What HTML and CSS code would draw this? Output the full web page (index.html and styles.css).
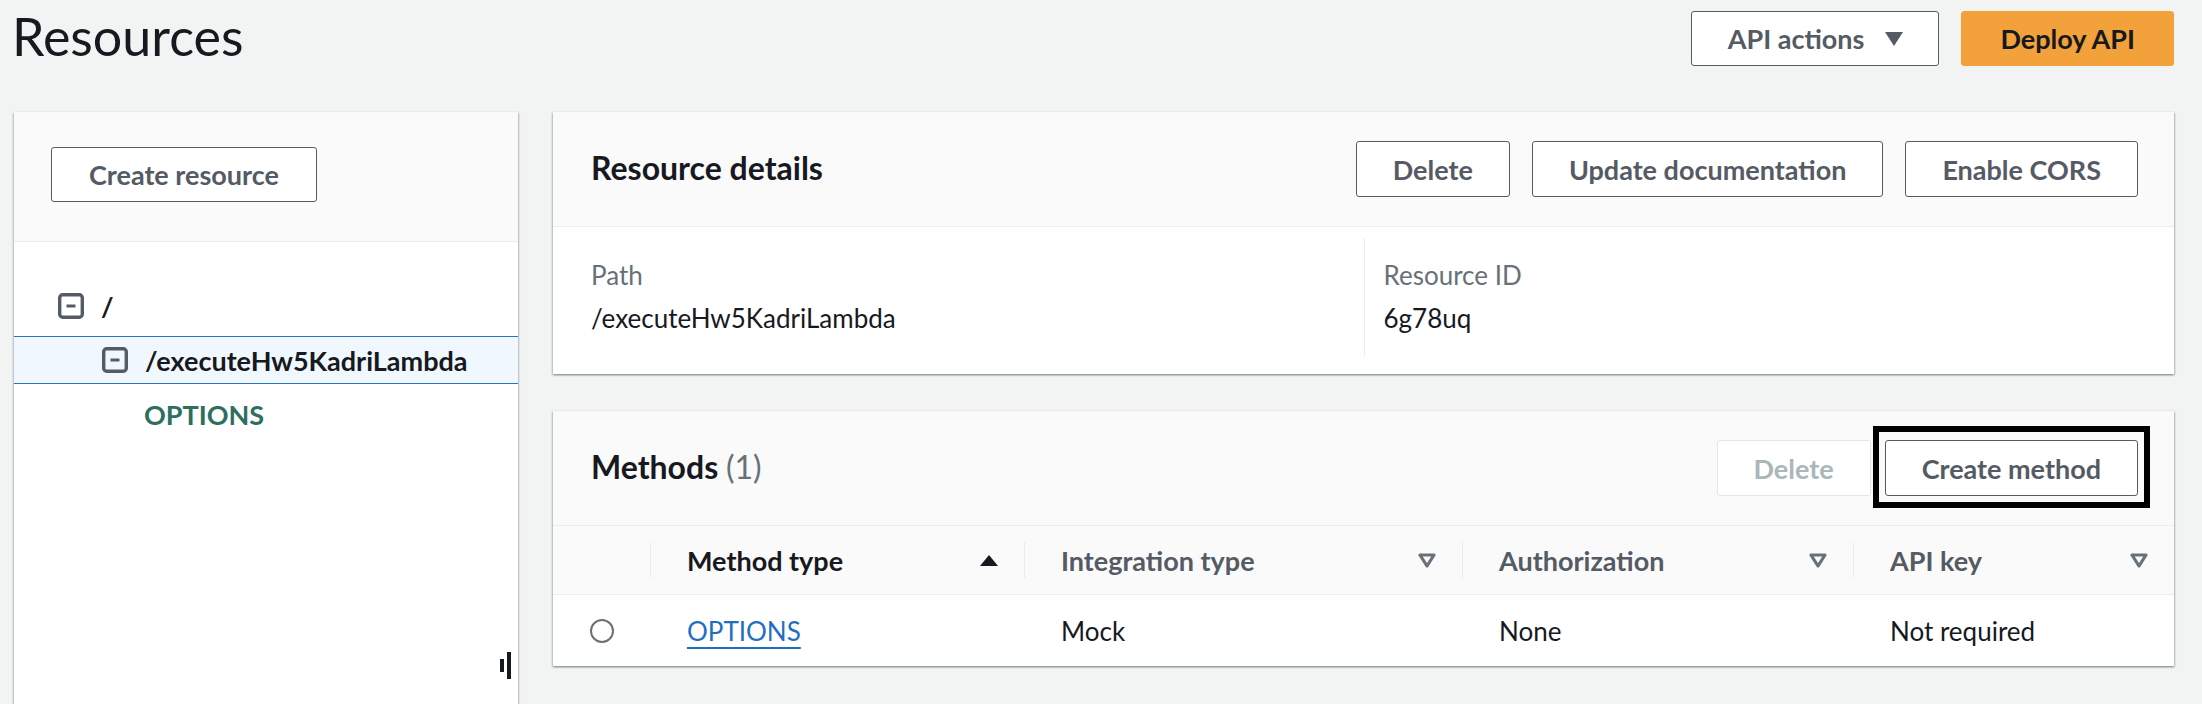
FILE: index.html
```html
<!DOCTYPE html>
<html lang="en">
<head>
<meta charset="utf-8">
<title>Resources</title>
<link rel="stylesheet" href="styles.css">
</head>
<body>
<div class="page">
  <header class="topbar">
    <h1 class="page-title">Resources</h1>
    <div class="actions">
      <button class="btn btn-dropdown">API actions
        <svg class="caret" width="18" height="14" viewBox="0 0 18 14"><polygon points="0,0 18,0 9,14" fill="#545b64"/></svg>
      </button>
      <button class="btn btn-primary">Deploy API</button>
    </div>
  </header>

  <main class="main">
    <aside class="side">
      <div class="side-head">
        <button class="btn">Create resource</button>
      </div>
      <ul class="tree">
        <li class="node lvl0">
          <svg class="toggle" width="26" height="26" viewBox="0 0 26 26"><rect x="1.7" y="1.7" width="22.6" height="22.6" rx="3" fill="none" stroke="#545b64" stroke-width="3.4"/><line x1="8.5" y1="13" x2="17.5" y2="13" stroke="#545b64" stroke-width="3"/></svg>
          <span>/</span>
        </li>
        <li class="node lvl1 selected">
          <svg class="toggle" width="26" height="26" viewBox="0 0 26 26"><rect x="1.7" y="1.7" width="22.6" height="22.6" rx="3" fill="none" stroke="#545b64" stroke-width="3.4"/><line x1="8.5" y1="13" x2="17.5" y2="13" stroke="#545b64" stroke-width="3"/></svg>
          <span>/executeHw5KadriLambda</span>
        </li>
        <li class="node lvl2 method">OPTIONS</li>
      </ul>
      <svg class="resize-handle" width="11" height="28" viewBox="0 0 11 28"><rect x="0" y="7" width="4" height="13" fill="#16191f"/><rect x="7" y="0" width="4" height="27" fill="#16191f"/></svg>
    </aside>

    <section class="content">
      <div class="panel">
        <div class="panel-head">
          <h2 class="panel-title">Resource details</h2>
          <div class="btn-group">
            <button class="btn">Delete</button>
            <button class="btn">Update documentation</button>
            <button class="btn">Enable CORS</button>
          </div>
        </div>
        <div class="details">
          <div class="detail">
            <div class="label">Path</div>
            <div class="value">/executeHw5KadriLambda</div>
          </div>
          <div class="detail">
            <div class="label">Resource ID</div>
            <div class="value">6g78uq</div>
          </div>
        </div>
      </div>

      <div class="panel">
        <div class="panel-head">
          <h2 class="panel-title">Methods <span class="count">(1)</span></h2>
          <div class="btn-group tight">
            <button class="btn btn-disabled">Delete</button>
            <button class="btn btn-focus">Create method</button>
          </div>
        </div>
        <div class="table-head">
          <div class="th-empty"></div>
          <div class="th sorted"><span>Method type</span>
            <svg width="18" height="11" viewBox="0 0 18 11"><polygon points="9,0 18,11 0,11" fill="#16191f"/></svg>
          </div>
          <div class="th"><span>Integration type</span>
            <svg width="18" height="15" viewBox="0 0 18 15"><polygon points="2,2 16,2 9,13" fill="none" stroke="#687078" stroke-width="3.2" stroke-linejoin="round"/></svg>
          </div>
          <div class="th"><span>Authorization</span>
            <svg width="18" height="15" viewBox="0 0 18 15"><polygon points="2,2 16,2 9,13" fill="none" stroke="#687078" stroke-width="3.2" stroke-linejoin="round"/></svg>
          </div>
          <div class="th"><span>API key</span>
            <svg width="18" height="15" viewBox="0 0 18 15"><polygon points="2,2 16,2 9,13" fill="none" stroke="#687078" stroke-width="3.2" stroke-linejoin="round"/></svg>
          </div>
        </div>
        <div class="table-row">
          <div class="td"><span class="radio"></span></div>
          <div class="td"><a class="link" href="#">OPTIONS</a></div>
          <div class="td">Mock</div>
          <div class="td">None</div>
          <div class="td">Not required</div>
        </div>
      </div>
    </section>
  </main>
</div>
</body>
</html>
```

FILE: styles.css
```css
* { box-sizing: border-box; }

html, body {
  margin: 0;
  padding: 0;
  height: 704px;
  overflow: hidden;
}

body {
  background: #f2f3f3;
  font-family: Lato, "Open Sans", sans-serif;
  color: #16191f;
}

.topbar {
  height: 112px;
  display: flex;
  justify-content: space-between;
  align-items: flex-start;
  padding: 11px 28px 0 12px;
}

.page-title {
  margin: -5px 0 0 0;
  font-size: 52px;
  line-height: 60px;
  font-weight: 400;
  color: #16191f;
}

.actions {
  display: flex;
  gap: 22px;
}

.btn {
  height: 55px;
  padding: 0 36px;
  border: 1px solid #545b64;
  border-radius: 3px;
  background: #fff;
  color: #545b64;
  font-family: Lato, "Open Sans", sans-serif;
  font-size: 27px;
  font-weight: 700;
  display: inline-flex;
  align-items: center;
  justify-content: center;
  white-space: nowrap;
}

.btn-dropdown {
  gap: 21px;
  padding: 0 35px 0 36px;
}

.btn-primary {
  background: #f2a13b;
  border-color: #f2a13b;
  color: #16191f;
  padding: 0 38px;
}

.btn-disabled {
  border-color: #e3e6e8;
  color: #aab7b8;
}

.btn-focus {
  position: relative;
}

.btn-focus::after {
  content: "";
  position: absolute;
  top: -15px;
  bottom: -13px;
  left: -13px;
  right: -13px;
  border: 6px solid #000;
}

.main {
  display: flex;
  gap: 35px;
  padding: 0 28px 0 14px;
  align-items: flex-start;
}

.side {
  position: relative;
  flex: none;
  width: 504px;
  height: 620px;
  background: #fff;
  box-shadow: 0 1px 2px 0 rgba(0, 28, 36, 0.3), 1px 1px 2px 0 rgba(0, 28, 36, 0.15), -1px 1px 2px 0 rgba(0, 28, 36, 0.15);
}

.side-head {
  height: 130px;
  padding: 35px 37px;
  background: #fafafa;
  border-bottom: 1px solid #eaeded;
}

.side-head .btn {
  padding: 0 37px;
}

.tree {
  list-style: none;
  margin: 0;
  padding: 40px 0 0 0;
  display: flex;
  flex-direction: column;
  gap: 6px;
}

.node {
  height: 48px;
  display: flex;
  align-items: center;
  gap: 17px;
  font-size: 27px;
  font-weight: 700;
  color: #16191f;
}

.toggle { flex: none; }

.lvl0 { padding-left: 44px; }
.lvl1 { padding-left: 88px; }
.lvl2 { padding-left: 130px; }

.selected {
  background: #f1f8fd;
  border-top: 1px solid #2b74c0;
  border-bottom: 1px solid #2b74c0;
}

.method {
  color: #2d6e5f;
}

.resize-handle {
  position: absolute;
  right: 7px;
  top: 540px;
}

.content {
  flex: 1;
  display: flex;
  flex-direction: column;
  gap: 37px;
}

.panel {
  background: #fff;
  box-shadow: 0 1px 2px 0 rgba(0, 28, 36, 0.35), 1px 1px 2px 0 rgba(0, 28, 36, 0.15), -1px 1px 2px 0 rgba(0, 28, 36, 0.15);
}

.panel-head {
  height: 115px;
  background: #fafafa;
  border-bottom: 1px solid #eaeded;
  display: flex;
  align-items: center;
  justify-content: space-between;
  padding: 0 36px 0 38px;
}

.panel-title {
  margin: 0 0 4px 0;
  font-size: 32px;
  font-weight: 700;
  color: #16191f;
}

.count {
  font-weight: 400;
  color: #687078;
}

.btn-group {
  display: flex;
  gap: 22px;
}

.btn-group .btn { height: 56px; }

.btn-group.tight { gap: 14px; }

.details {
  display: grid;
  grid-template-columns: 1fr 1fr;
  padding: 11px 38px 18px 38px;
}

.detail {
  padding: 19px 0 20px 0;
}

.detail + .detail {
  border-left: 1px solid #eaeded;
  padding-left: 19px;
}

.label {
  font-size: 26px;
  line-height: 36px;
  color: #687078;
}

.value {
  margin-top: 7px;
  font-size: 26px;
  line-height: 36px;
  color: #16191f;
}

.table-head,
.table-row {
  display: grid;
  grid-template-columns: 97px 374px 438px 391px 321px;
  align-items: center;
}

.table-head {
  height: 69px;
  background: #fafafa;
  border-bottom: 1px solid #eaeded;
}

.th {
  height: 36px;
  display: flex;
  align-items: center;
  justify-content: space-between;
  border-left: 1px solid #eaeded;
  padding: 0 26px 0 36px;
  font-size: 27px;
  font-weight: 700;
  color: #545b64;
}

.th.sorted { color: #16191f; }

.table-row {
  height: 71px;
}

.td {
  padding-left: 37px;
  font-size: 26px;
  color: #16191f;
  display: flex;
  align-items: center;
}

.radio {
  width: 24px;
  height: 24px;
  border: 2px solid #687078;
  border-radius: 50%;
}

.link {
  color: #1f6fc1;
  text-decoration: underline;
  text-decoration-thickness: 2px;
  text-underline-offset: 6px;
}
```
